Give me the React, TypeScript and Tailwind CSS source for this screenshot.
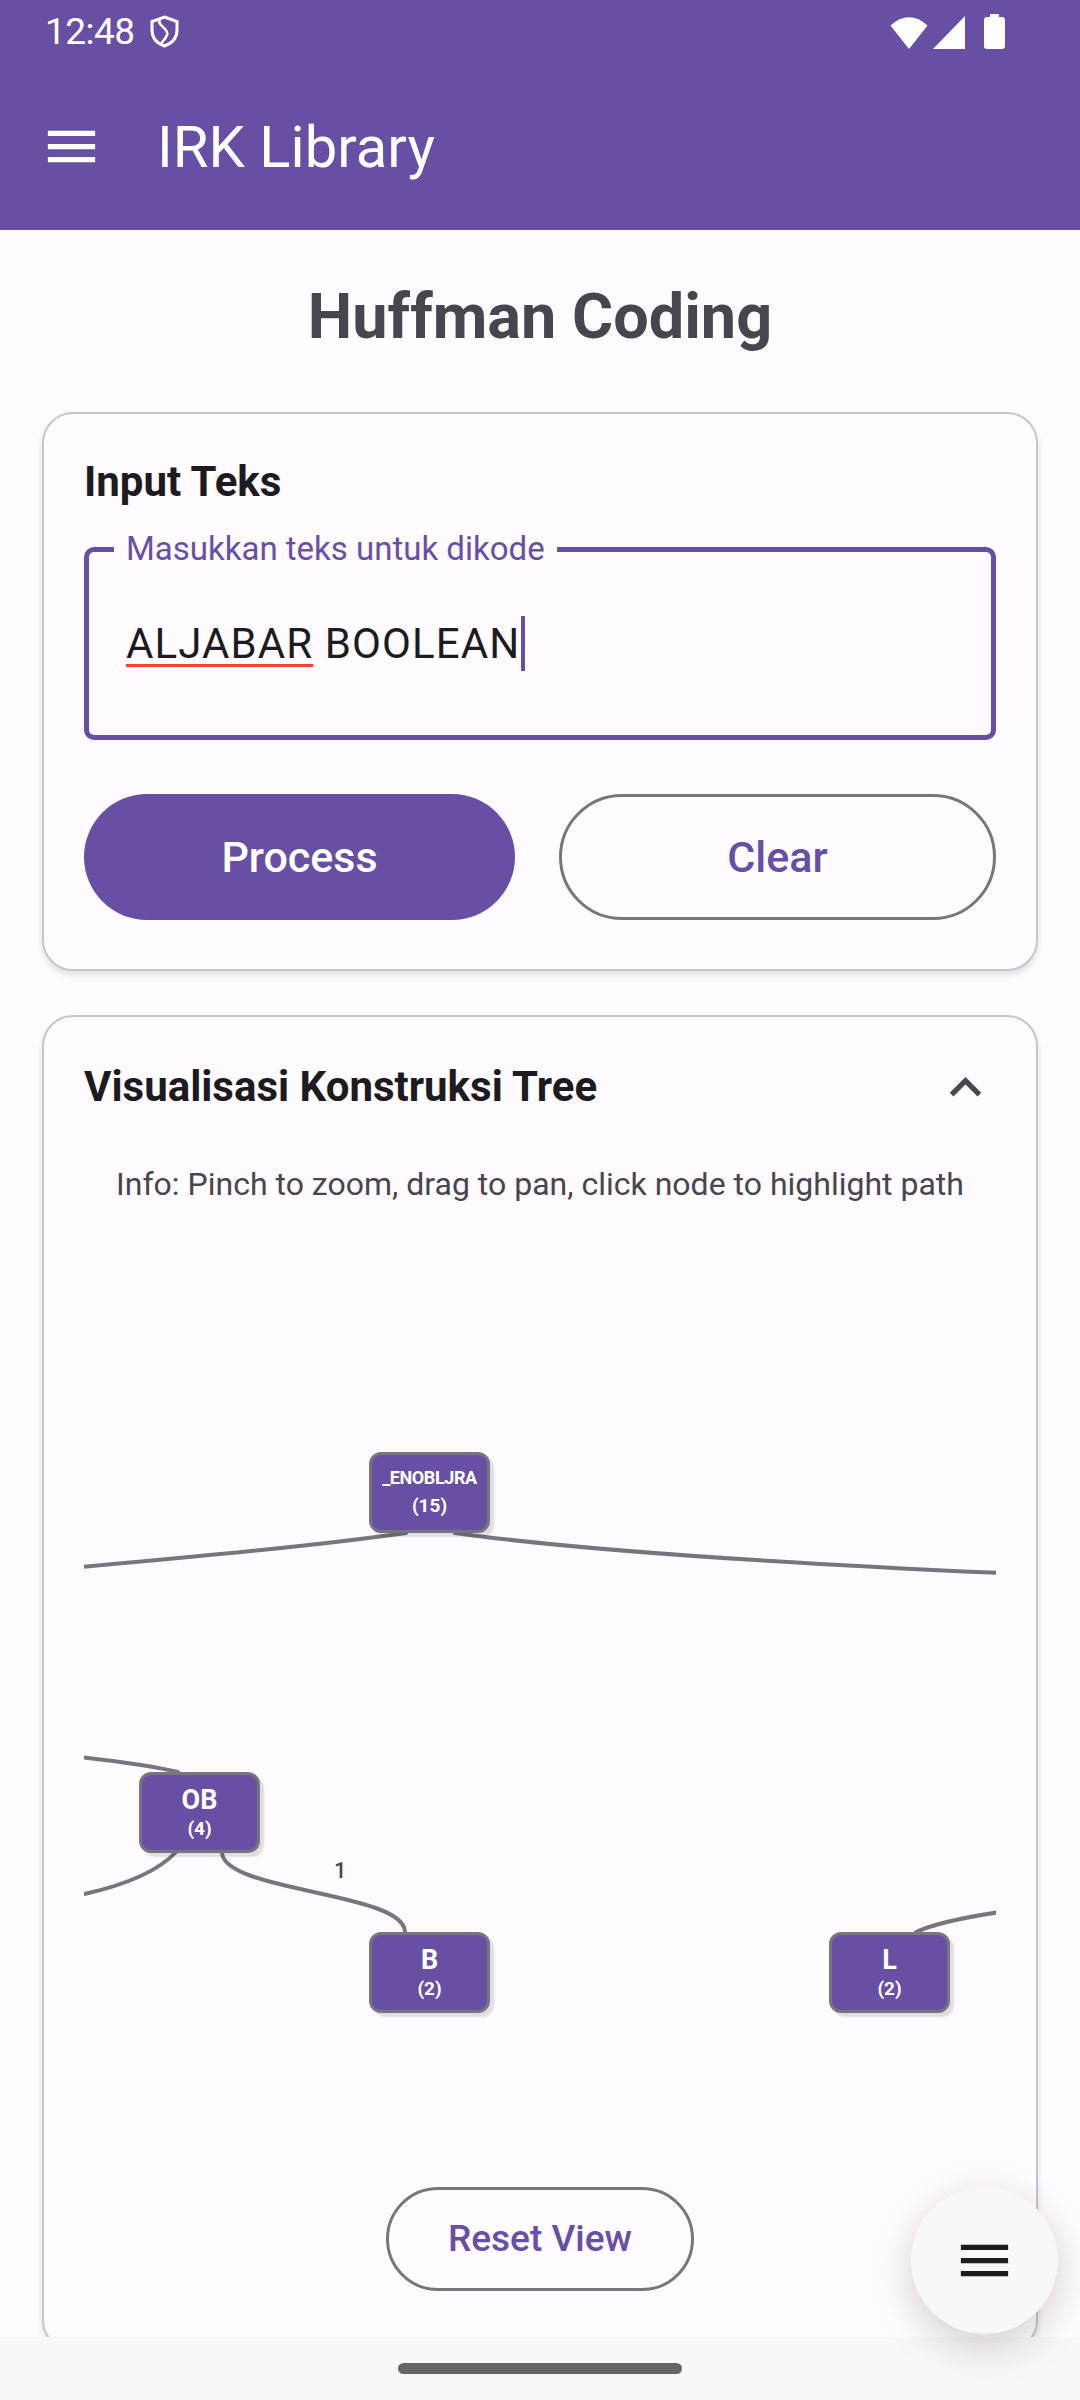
import React from 'react'

type TreeNode = {
  id: string
  label: string
  count: number
  x: number
  y: number
  big?: boolean
}

// canvas origin on the page: x 84, y 1210
const nodes: TreeNode[] = [
  { id: 'root', label: '_ENOBLJRA', count: 15, x: 285, y: 242 },
  { id: 'ob', label: 'OB', count: 4, x: 55, y: 562, big: true },
  { id: 'b', label: 'B', count: 2, x: 285, y: 722, big: true },
  { id: 'l', label: 'L', count: 2, x: 745, y: 722, big: true },
]

// edge paths in page coordinates (svg viewBox is offset to match)
const edges = [
  'M 406 1533 Q 300 1548 80 1567',
  'M 455 1533 Q 620 1556 1000 1573',
  'M 80 1757 Q 150 1765 178 1772',
  'M 176 1852 Q 150 1880 80 1895',
  'M 222 1852 C 222 1892 405 1892 405 1932',
  'M 1000 1912 Q 940 1921 916 1932',
]

function MenuIcon({ className }: { className?: string }) {
  return (
    <svg viewBox="0 0 24 24" className={className} fill="currentColor">
      <path d="M3 18h18v-2H3v2zm0-5h18v-2H3v2zm0-7v2h18V6H3z" />
    </svg>
  )
}

function StatusBar() {
  return (
    <div className="flex h-[63px] items-center justify-between pl-[45px] pr-[75px] text-white">
      <div className="flex items-center gap-[14px]">
        <span className="text-[37px] leading-none tracking-[-0.5px]">12:48</span>
        <svg width="31" height="33" viewBox="0 0 31 33" fill="none" stroke="white" strokeWidth="3">
          <path d="M15.5 2 L28 6.5 V15 C28 23 22.5 28.5 15.5 31 C8.5 28.5 3 23 3 15 V6.5 Z" />
          <path d="M11 5 C7 10 21 14 18 20 C16.5 24 13 27 12 29" strokeWidth="2.5" />
        </svg>
      </div>
      <div className="flex items-end gap-[5px]">
        <svg width="38" height="33" viewBox="0 0 38 33" fill="white">
          <path d="M19 33 L0.5 9.5 Q19 -7 37.5 9.5 Z" />
        </svg>
        <svg width="32" height="33" viewBox="0 0 32 33" fill="white">
          <path d="M32 0 L32 33 L0 33 Z" />
        </svg>
        <svg width="21" height="35" viewBox="0 0 21 35" fill="white" className="ml-[14px]">
          <rect x="6" y="0" width="9" height="4" rx="1" />
          <rect x="0" y="3" width="21" height="32" rx="3" />
        </svg>
      </div>
    </div>
  )
}

function TreeCanvas() {
  return (
    <div className="relative mt-[6px] h-[950px] w-full overflow-hidden">
      <svg
        width="912"
        height="950"
        viewBox="84 1210 912 950"
        className="absolute left-0 top-0"
        fill="none"
        stroke="#79747E"
        strokeWidth="4"
        strokeLinecap="round"
      >
        {edges.map((d) => (
          <path key={d} d={d} />
        ))}
      </svg>
      <span className="absolute left-[250px] top-[650px] text-[22px] font-medium leading-none text-[#49454F]">
        1
      </span>
      {nodes.map((n) => (
        <div
          key={n.id}
          className="absolute flex h-[81px] w-[121px] flex-col items-center justify-center rounded-[12px] border-[3px] border-[#79747E] bg-[#6750A4] text-white shadow-[4px_4px_2px_rgba(0,0,0,0.12)]"
          style={{ left: n.x, top: n.y }}
        >
          <span
            className={
              n.big
                ? 'text-[27px] font-bold leading-[30px]'
                : 'text-[18px] font-bold leading-[22px] tracking-[-0.4px]'
            }
          >
            {n.label}
          </span>
          <span className={n.big ? 'mt-[2px] text-[19px] font-bold leading-[24px]' : 'mt-[5px] text-[19px] font-bold leading-[24px]'}>
            ({n.count})
          </span>
        </div>
      ))}
    </div>
  )
}

export default function App() {
  return (
    <div className="relative h-[2400px] w-[1080px] overflow-hidden bg-[#FFFBFE] font-[Roboto,sans-serif]">
      <header className="bg-[#6750A4]">
        <StatusBar />
        <div className="flex h-[167px] items-center pl-[40px] text-white">
          <MenuIcon className="h-[63px] w-[63px]" />
          <h2 className="ml-[54px] text-[58px] leading-none">IRK Library</h2>
        </div>
      </header>

      <main className="px-[42px]">
        <h1 className="mt-[51px] text-center text-[63px] font-bold leading-[72px] text-[#49454F]">
          Huffman Coding
        </h1>

        <section className="mt-[59px] rounded-[31px] border-2 border-[#CAC4D0] bg-[#FFFBFE] px-[40px] pb-[49px] pt-[44px] shadow-[0_4px_6px_rgba(0,0,0,0.12)]">
          <h3 className="text-[42px] font-bold leading-[48px] text-[#1C1B1F]">Input Teks</h3>

          <div className="relative mt-[41px] flex h-[193px] items-center rounded-[10px] border-[5px] border-[#6750A4] pl-[37px]">
            <span className="absolute left-[25px] top-[-22px] bg-[#FFFBFE] px-[12px] text-[33px] leading-[38px] text-[#6750A4]">
              Masukkan teks untuk dikode
            </span>
            <div className="flex items-center text-[42px] leading-[50px] tracking-[1.1px] text-[#1C1B1F]">
              <span className="underline decoration-[#F44336] decoration-[3px] underline-offset-[6px]">ALJABAR</span>
              <span>&nbsp;BOOLEAN</span>
              <span className="ml-[1px] inline-block h-[55px] w-[4px] bg-[#6750A4]" />
            </div>
          </div>

          <div className="mt-[54px] flex gap-[44px]">
            <button className="flex h-[126px] flex-1 items-center justify-center rounded-full bg-[#6750A4] text-[43px] font-medium text-white">
              Process
            </button>
            <button className="flex h-[126px] flex-1 items-center justify-center rounded-full border-[3px] border-[#79747E] text-[43px] font-medium text-[#6750A4]">
              Clear
            </button>
          </div>
        </section>

        <section className="mt-[44px] rounded-[31px] border-2 border-[#CAC4D0] bg-[#FFFBFE] px-[40px] pb-[58px] pt-[46px] shadow-[0_4px_6px_rgba(0,0,0,0.12)]">
          <div className="flex h-[48px] items-center justify-between">
            <h3 className="text-[42px] font-bold leading-[48px] text-[#1C1B1F]">Visualisasi Konstruksi Tree</h3>
            <svg viewBox="0 0 24 24" className="mr-[-1px] h-[63px] w-[63px] text-[#49454F]" fill="currentColor">
              <path d="M12 8l-6 6 1.41 1.41L12 10.83l4.59 4.58L18 14z" />
            </svg>
          </div>

          <p className="mt-[53px] text-center text-[32px] leading-[40px] text-[#49454F]">
            Info: Pinch to zoom, drag to pan, click node to highlight path
          </p>

          <TreeCanvas />

          <div className="mt-[27px] flex justify-center">
            <button className="flex h-[104px] w-[308px] items-center justify-center rounded-full border-[3px] border-[#79747E] text-[37px] font-medium text-[#6750A4]">
              Reset View
            </button>
          </div>
        </section>
      </main>

      <div className="absolute bottom-0 left-0 flex h-[63px] w-full items-center justify-center bg-[#FAF7FC]">
        <div className="h-[11px] w-[284px] rounded-full bg-[#666468]" />
      </div>

      <button className="absolute left-[911px] top-[2187px] flex h-[147px] w-[147px] items-center justify-center rounded-full bg-[#F8F7FC] text-[#1C1B1F] shadow-[0_12px_40px_rgba(0,0,0,0.18)]">
        <MenuIcon className="h-[63px] w-[63px]" />
      </button>
    </div>
  )
}
